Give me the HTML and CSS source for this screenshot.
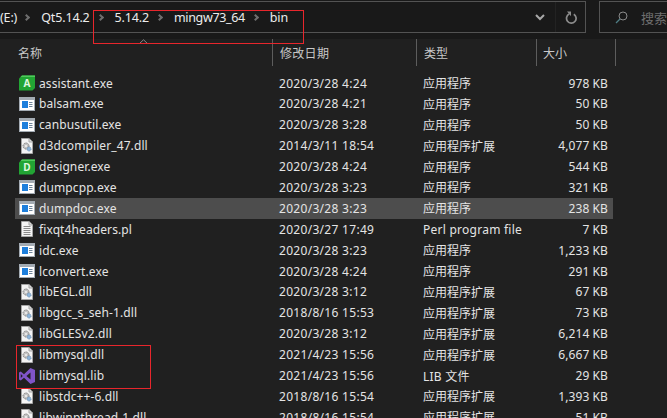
FILE: index.html
```html
<!DOCTYPE html>
<html lang="zh">
<head>
<meta charset="utf-8">
<title>bin</title>
<link rel="stylesheet" href="styles.css">
</head>
<body>
<svg class="defs" width="0" height="0">
  <defs>
    <symbol id="exe" viewBox="0 0 16 16">
      <rect x="0" y="1" width="16" height="14" fill="#a3abb3"/>
      <rect x="1" y="4" width="14" height="10" fill="#fff"/>
      <rect x="3" y="5" width="6" height="7" fill="#1e7fdc"/>
      <path d="M10 6.500h3.500M10 8.500h3.500M10 10.500h3.500" stroke="#6f8499" stroke-width="1"/>
    </symbol>
    <symbol id="dll" viewBox="0 0 16 16">
      <path d="M2.500 .5h7.500l3.500 3.500v11.500h-11z" fill="#f4f4f4" stroke="#a5a5a5"/>
      <path d="M10 .5v3.500h3.500" fill="#ddd" stroke="#a5a5a5"/>
      <circle cx="7" cy="8" r="3" fill="#c4c4c4" stroke="#7d7d7d" stroke-dasharray="1.400 .8"/>
      <circle cx="7" cy="8" r="1" fill="#f4f4f4"/>
      <circle cx="10" cy="11" r="2" fill="#8db4da" stroke="#6b8fb2" stroke-dasharray="1 .6"/>
    </symbol>
    <symbol id="txt" viewBox="0 0 16 16">
      <path d="M2.500 .5h7.500l3.500 3.500v11.500h-11z" fill="#f4f4f4" stroke="#a5a5a5"/>
      <path d="M10 .5v3.500h3.500" fill="#ddd" stroke="#a5a5a5"/>
      <path d="M4.500 5.500h7M4.500 7.500h7M4.500 9.500h7M4.500 11.500h7M4.500 13.500h7" stroke="#8a8a8a"/>
    </symbol>
    <symbol id="vs" viewBox="0 0 16 16">
      <path d="M11.500 0 16 2v12l-4.500 2L5 9.800 1.800 12.400 0 11.400V4.600l1.800-1L5 6.200zM11.500 4.500 7.400 8l4.100 3.500zM1.800 6v4l2-2z" fill="#7f55c8" fill-rule="evenodd"/>
    </symbol>
    <symbol id="qt" viewBox="0 0 16 16">
      <path d="M3 .5h13v12.500l-2.500 2.500H0V3.500z" fill="#22a534"/>
      <path d="M3 .5h13v1.500H1.500z" fill="#4fca5a"/>
    </symbol>
  </defs>
</svg>

<div class="window">
  <header class="toolbar">
    <div class="address">
      <nav class="crumbs">
        <span class="crumb crumb-drive">(E:)</span>
        <span class="chev"></span>
        <span class="crumb">Qt5.14.2</span>
        <span class="chev"></span>
        <span class="crumb">5.14.2</span>
        <span class="chev"></span>
        <span class="crumb crumb-narrow">mingw73_64</span>
        <span class="chev"></span>
        <span class="crumb">bin</span>
      </nav>
      <div class="drop">
        <svg width="10" height="7" viewBox="0 0 10 7"><path d="M1 1l4 4 4-4" fill="none" stroke="#a8a8a8" stroke-width="2"/></svg>
      </div>
      <div class="refresh">
        <svg width="12" height="13" viewBox="0 0 12 13"><path d="M8.800 3.200A4.800 4.800 0 1 1 4.200 3" fill="none" stroke="#8c8c8c" stroke-width="1.700"/><path d="M2 .5 6 .5 6 5.200z" fill="#8c8c8c"/></svg>
      </div>
    </div>
    <div class="search">
      <svg class="search-icon" width="13" height="13" viewBox="0 0 13 13"><circle cx="8" cy="5" r="4" fill="none" stroke="#8a8a8a"/><path d="M5 8l-4 4" stroke="#4f7d84" stroke-width="1.200"/></svg>
      <span class="search-text">搜索"bin"</span>
    </div>
  </header>

  <main class="list">
    <div class="row head">
      <div class="c-name">名称</div>
      <div class="c-date">修改日期</div>
      <div class="c-type">类型</div>
      <div class="c-size">大小</div>
    </div>
    <div class="row"><div class="c-name"><span class="qt"><svg class="ico"><use href="#qt"/></svg><b class="qt-l">A</b></span>assistant.exe</div><div class="c-date">2020/3/28 4:24</div><div class="c-type">应用程序</div><div class="c-size">978 KB</div></div>
    <div class="row"><div class="c-name"><svg class="ico"><use href="#exe"/></svg>balsam.exe</div><div class="c-date">2020/3/28 4:21</div><div class="c-type">应用程序</div><div class="c-size">50 KB</div></div>
    <div class="row"><div class="c-name"><svg class="ico"><use href="#exe"/></svg>canbusutil.exe</div><div class="c-date">2020/3/28 3:28</div><div class="c-type">应用程序</div><div class="c-size">50 KB</div></div>
    <div class="row"><div class="c-name"><svg class="ico"><use href="#dll"/></svg>d3dcompiler_47.dll</div><div class="c-date">2014/3/11 18:54</div><div class="c-type">应用程序扩展</div><div class="c-size">4,077 KB</div></div>
    <div class="row"><div class="c-name"><span class="qt"><svg class="ico"><use href="#qt"/></svg><b class="qt-l">D</b></span>designer.exe</div><div class="c-date">2020/3/28 4:24</div><div class="c-type">应用程序</div><div class="c-size">544 KB</div></div>
    <div class="row"><div class="c-name"><svg class="ico"><use href="#exe"/></svg>dumpcpp.exe</div><div class="c-date">2020/3/28 3:23</div><div class="c-type">应用程序</div><div class="c-size">321 KB</div></div>
    <div class="row selected"><div class="c-name"><svg class="ico"><use href="#exe"/></svg>dumpdoc.exe</div><div class="c-date">2020/3/28 3:23</div><div class="c-type">应用程序</div><div class="c-size">238 KB</div></div>
    <div class="row"><div class="c-name"><svg class="ico"><use href="#txt"/></svg>fixqt4headers.pl</div><div class="c-date">2020/3/27 17:49</div><div class="c-type latin">Perl program file</div><div class="c-size">7 KB</div></div>
    <div class="row"><div class="c-name"><svg class="ico"><use href="#exe"/></svg>idc.exe</div><div class="c-date">2020/3/28 3:23</div><div class="c-type">应用程序</div><div class="c-size">1,233 KB</div></div>
    <div class="row"><div class="c-name"><svg class="ico"><use href="#exe"/></svg>lconvert.exe</div><div class="c-date">2020/3/28 4:24</div><div class="c-type">应用程序</div><div class="c-size">291 KB</div></div>
    <div class="row"><div class="c-name"><svg class="ico"><use href="#dll"/></svg>libEGL.dll</div><div class="c-date">2020/3/28 3:12</div><div class="c-type">应用程序扩展</div><div class="c-size">67 KB</div></div>
    <div class="row"><div class="c-name"><svg class="ico"><use href="#dll"/></svg>libgcc_s_seh-1.dll</div><div class="c-date">2018/8/16 15:53</div><div class="c-type">应用程序扩展</div><div class="c-size">73 KB</div></div>
    <div class="row"><div class="c-name"><svg class="ico"><use href="#dll"/></svg>libGLESv2.dll</div><div class="c-date">2020/3/28 3:12</div><div class="c-type">应用程序扩展</div><div class="c-size">6,214 KB</div></div>
    <div class="row"><div class="c-name"><svg class="ico"><use href="#dll"/></svg>libmysql.dll</div><div class="c-date">2021/4/23 15:56</div><div class="c-type">应用程序扩展</div><div class="c-size">6,667 KB</div></div>
    <div class="row"><div class="c-name"><svg class="ico"><use href="#vs"/></svg>libmysql.lib</div><div class="c-date">2021/4/23 15:56</div><div class="c-type latin">LIB 文件</div><div class="c-size">29 KB</div></div>
    <div class="row"><div class="c-name"><svg class="ico"><use href="#dll"/></svg>libstdc++-6.dll</div><div class="c-date">2018/8/16 15:54</div><div class="c-type">应用程序扩展</div><div class="c-size">1,393 KB</div></div>
    <div class="row"><div class="c-name"><svg class="ico"><use href="#dll"/></svg>libwinpthread-1.dll</div><div class="c-date">2018/8/16 15:54</div><div class="c-type">应用程序扩展</div><div class="c-size">51 KB</div></div>
  </main>

  <svg class="caret" width="9" height="5" viewBox="0 0 9 5"><path d="M.5 4.500 4.500 .8 8.500 4.500" fill="none" stroke="#8a8a8a"/></svg>
  <div class="mark mark-path"></div>
  <div class="mark mark-files"></div>
</div>
</body>
</html>
```

FILE: styles.css
```css
* { box-sizing: border-box; }
html, body { margin: 0; padding: 0; }
body {
  width: 667px;
  height: 418px;
  overflow: hidden;
  background: #202020;
  font-family: "Noto Sans", "Noto Sans CJK SC", sans-serif;
  font-size: 12px;
  color: #e4e4e4;
}
.defs { position: absolute; }
.window { position: relative; width: 667px; height: 418px; overflow: hidden; }

.toolbar {
  display: flex;
  gap: 13px;
  height: 39px;
  padding: 1px 0 6px;
  background: #191919;
}
.address {
  display: flex;
  align-items: center;
  width: 586px;
  flex: none;
  border: 1px solid #535353;
  border-left: 0;
}
.crumbs { display: flex; align-items: center; flex: 1; height: 100%; }
.crumb { font-size: 12.5px; letter-spacing: -.15px; color: #ececec; }
.crumb-narrow { letter-spacing: -.35px; }
.chev {
  width: 5px;
  height: 5px;
  margin: 0 12px 0 8px;
  border-top: 2px solid #6e6e6e;
  border-right: 2px solid #6e6e6e;
  transform: rotate(45deg);
}
.chev:nth-child(2) { margin-left: 7px; margin-right: 12px; }
.drop {
  display: flex;
  justify-content: center;
  align-items: center;
  width: 30px;
  height: 100%;
}
.refresh {
  display: flex;
  justify-content: center;
  align-items: center;
  width: 30px;
  height: 100%;
  border-left: 1px solid #232323;
}
.search {
  display: flex;
  align-items: center;
  gap: 13px;
  flex: 1;
  padding-left: 15px;
  border: 1px solid #535353;
  border-right: 0;
  white-space: nowrap;
  overflow: hidden;
  font-size: 13px;
  color: #6e6e6e;
}
.search-icon { flex: none; }

.list { display: flex; flex-direction: column; }
.row {
  display: grid;
  grid-template-columns: 257px 144px 120px 72px;
  align-items: center;
  flex: 0 0 20.9px;
  height: 20.9px;
  margin-left: 15px;
  width: 598px;
  white-space: nowrap;
}
.head {
  grid-template-columns: 257px 144px 120px 80px;
  flex: 0 0 27px;
  height: 27px;
  margin-bottom: 6.6px;
  width: 602px;
  color: #c8c8c8;
}
.head > div { display: flex; align-items: center; height: 27px; }
.head .c-date, .head .c-type, .head .c-size { border-left: 1px solid #5d5d5d; }
.head .c-size { padding-left: 6px; border-right: 1px solid #5d5d5d; }
.head .c-name { padding-left: 3px; }
.selected { background: #4d4d4d; }
.c-name { display: flex; align-items: center; padding-left: 4px; letter-spacing: .1px; }
.c-date { padding-left: 7px; letter-spacing: .3px; }
.c-type { padding-left: 7px; }
.latin { letter-spacing: .25px; }
.c-size { text-align: right; letter-spacing: .1px; }
.ico { width: 16px; height: 16px; margin-right: 4px; flex: none; }
.qt { position: relative; display: flex; }
.qt-l {
  position: absolute;
  left: 4px;
  top: 1px;
  width: 8px;
  font-size: 10px;
  line-height: 14px;
  text-align: center;
  color: #dff7df;
}
.caret { position: absolute; left: 139px; top: 39px; }
.mark { position: absolute; border: 1px solid #e8262c; }
.mark-path { left: 93px; top: 10px; width: 211px; height: 34px; }
.mark-files { left: 16px; top: 345px; width: 135px; height: 44px; }
```
